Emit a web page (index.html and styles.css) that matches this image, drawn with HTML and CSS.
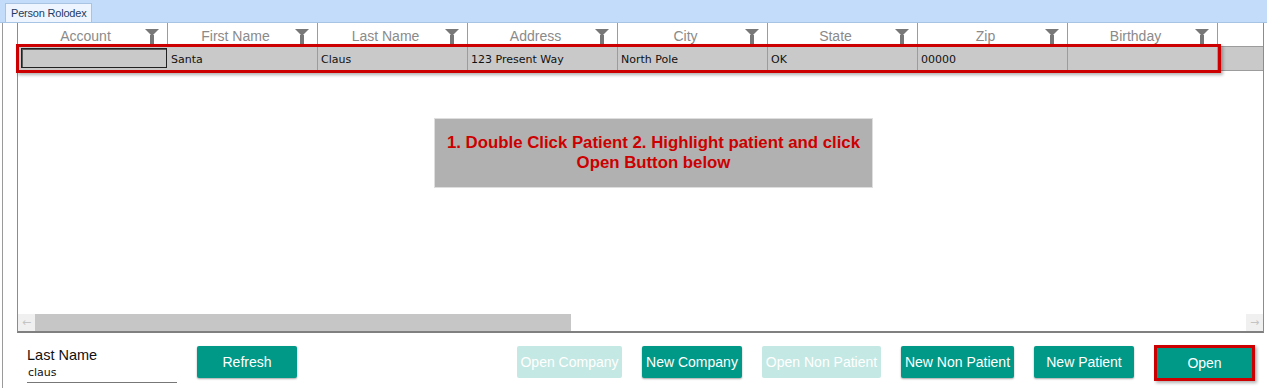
FILE: index.html
```html
<!DOCTYPE html>
<html lang="en">
<head>
  <meta charset="UTF-8" />
  <title>Person Rolodex</title>
  <link rel="stylesheet" href="styles.css">
</head>
<body>
  <div class="tabbar">
    <div class="tab">Person Rolodex</div>
  </div>

  <div class="panel">
    <div class="grid">
      <div class="grid-head">
        <div class="hcell">Account<span class="funnel"></span></div>
        <div class="hcell">First Name<span class="funnel"></span></div>
        <div class="hcell">Last Name<span class="funnel"></span></div>
        <div class="hcell">Address<span class="funnel"></span></div>
        <div class="hcell">City<span class="funnel"></span></div>
        <div class="hcell">State<span class="funnel"></span></div>
        <div class="hcell">Zip<span class="funnel"></span></div>
        <div class="hcell">Birthday<span class="funnel"></span></div>
        <div class="hcell filler"></div>
      </div>

      <div class="grid-row">
        <div class="cell selected"></div>
        <div class="cell">Santa</div>
        <div class="cell">Claus</div>
        <div class="cell">123 Present Way</div>
        <div class="cell">North Pole</div>
        <div class="cell">OK</div>
        <div class="cell">00000</div>
        <div class="cell"></div>
        <div class="cell filler"></div>
      </div>
      <div class="row-mark"></div>

      <div class="grid-body">
        <div class="hint">1. Double Click Patient 2. Highlight patient and click Open Button below</div>
      </div>

      <div class="hscroll">
        <div class="arrow">&larr;</div>
        <div class="thumb"></div>
        <div class="track"></div>
        <div class="arrow">&rarr;</div>
      </div>
    </div>

    <div class="footer">
      <div class="search">
        <label>Last Name</label>
        <div class="search-input">claus</div>
      </div>
      <button class="btn refresh">Refresh</button>
      <div class="actions">
        <button class="btn disabled w105">Open Company</button>
        <button class="btn w100">New Company</button>
        <button class="btn disabled w119">Open Non Patient</button>
        <button class="btn w113">New Non Patient</button>
        <button class="btn w100">New Patient</button>
        <button class="btn open">Open</button>
      </div>
    </div>
  </div>
</body>
</html>
```

FILE: styles.css
```css
* {
  margin: 0;
  padding: 0;
  box-sizing: border-box;
}

body {
  width: 1267px;
  height: 388px;
  background: #ffffff;
  font-family: 'DejaVu Sans', sans-serif;
  overflow: hidden;
}

/* Tab strip */
.tabbar {
  height: 23px;
  background: #c2dcf9;
  padding: 3px 0 0 5px;
  border-bottom: 1px solid #a8c4e4;
}

.tab {
  width: 87px;
  height: 19px;
  background: #eef5fe;
  border: 1px solid #a9c3e2;
  border-bottom: none;
  font-family: 'Liberation Sans', sans-serif;
  font-size: 11px;
  letter-spacing: -0.2px;
  color: #1d3c63;
  padding: 3px 0 0 5px;
}

/* Panel */
.panel {
  height: 365px;
  margin-left: 2px;
  width: 1263px;
  border-left: 1px solid #9a9a9a;
  padding-left: 14px;
}

.grid {
  position: relative;
  width: 1247px;
  height: 310px;
  border-left: 1px solid #8c8c8c;
  border-right: 1px solid #8c8c8c;
  border-bottom: 2px solid #808080;
  display: flex;
  flex-direction: column;
}

.grid-head,
.grid-row {
  display: flex;
  height: 24px;
  flex-shrink: 0;
}

.hcell {
  position: relative;
  width: 150px;
  flex-shrink: 0;
  border-right: 1px solid #9c9c9c;
  border-bottom: 1px solid #9c9c9c;
  text-align: center;
  font-family: 'Liberation Sans', sans-serif;
  font-size: 14px;
  color: #8a8a8a;
  line-height: 27px;
  padding-right: 14px;
  overflow: hidden;
}

.hcell.filler,
.cell.filler {
  flex: 1;
  width: auto;
  border-right: none;
}

.funnel {
  position: absolute;
  right: 8px;
  top: 6px;
  width: 14px;
  height: 15px;
}

.funnel::before {
  content: '';
  position: absolute;
  left: 0;
  top: 0;
  border-left: 7px solid transparent;
  border-right: 7px solid transparent;
  border-top: 7px solid #777777;
}

.funnel::after {
  content: '';
  position: absolute;
  left: 5px;
  top: 6px;
  width: 4px;
  height: 9px;
  background: #777777;
}

.grid-row {
  background: #c9c9c9;
  border-bottom: 1px solid #9c9c9c;
}

.cell {
  width: 150px;
  flex-shrink: 0;
  border-right: 1px solid #9c9c9c;
  font-family: 'DejaVu Sans', sans-serif;
  font-size: 11px;
  color: #111111;
  line-height: 25px;
  padding-left: 3px;
  overflow: hidden;
}

.cell.selected {
  margin: 1px 1px 2px 3px;
  width: 146px;
  border: 1px solid #222222;
  box-shadow: inset 1px 1px 0 #5a5a5a;
}

.row-mark {
  position: absolute;
  left: -2px;
  top: 21px;
  width: 1205px;
  height: 29px;
  border: 3px solid #cc0000;
  box-shadow: 2px 2px 3px rgba(0, 0, 0, 0.3);
}

.grid-body {
  flex: 1;
  position: relative;
}

.hint {
  position: absolute;
  left: 416px;
  top: 47px;
  width: 439px;
  height: 70px;
  background: #b1b1b1;
  border: 1px solid #dedede;
  color: #cc0000;
  font-family: 'Liberation Sans', sans-serif;
  font-weight: bold;
  font-size: 16.8px;
  line-height: 20px;
  text-align: center;
  padding: 14px 4px 0;
}

.hscroll {
  display: flex;
  height: 17px;
  flex-shrink: 0;
}

.arrow {
  width: 17px;
  background: #f0f0f0;
  color: #c4c4c4;
  font-size: 11px;
  line-height: 17px;
  text-align: center;
}

.thumb {
  width: 536px;
  background: #c6c6c6;
}

.track {
  flex: 1;
  background: #ffffff;
}

/* Footer */
.footer {
  display: flex;
  align-items: flex-start;
  padding: 13px 0 0 10px;
}

.search {
  width: 150px;
  flex-shrink: 0;
  margin-right: 20px;
  padding-top: 1px;
}

.search label {
  display: block;
  font-family: 'Liberation Sans', sans-serif;
  font-size: 14.5px;
  color: #111111;
}

.search-input {
  font-family: 'DejaVu Sans', sans-serif;
  font-size: 11px;
  color: #111111;
  padding: 3px 0 3px 1px;
  border-bottom: 1px solid #777777;
}

.btn {
  height: 32px;
  flex-shrink: 0;
  background: #009887;
  color: #ffffff;
  border: none;
  border-radius: 2px;
  box-shadow: 0 1px 2px rgba(0, 0, 0, 0.35);
  font-family: 'Liberation Sans', sans-serif;
  font-size: 14px;
  white-space: nowrap;
  padding: 0;
}

.btn.disabled {
  background: #c4e8e3;
  box-shadow: none;
}

.refresh,
.w100 {
  width: 100px;
}

.w105 {
  width: 105px;
}

.w113 {
  width: 113px;
}

.w119 {
  width: 119px;
}

.actions {
  display: flex;
  gap: 20px;
  margin-left: 220px;
}

.btn.open {
  margin-top: -1px;
  height: 36px;
  width: 101px;
  border: 3px solid #cc0000;
  border-radius: 0;
  box-shadow: 2px 2px 3px rgba(0, 0, 0, 0.3);
}
```
